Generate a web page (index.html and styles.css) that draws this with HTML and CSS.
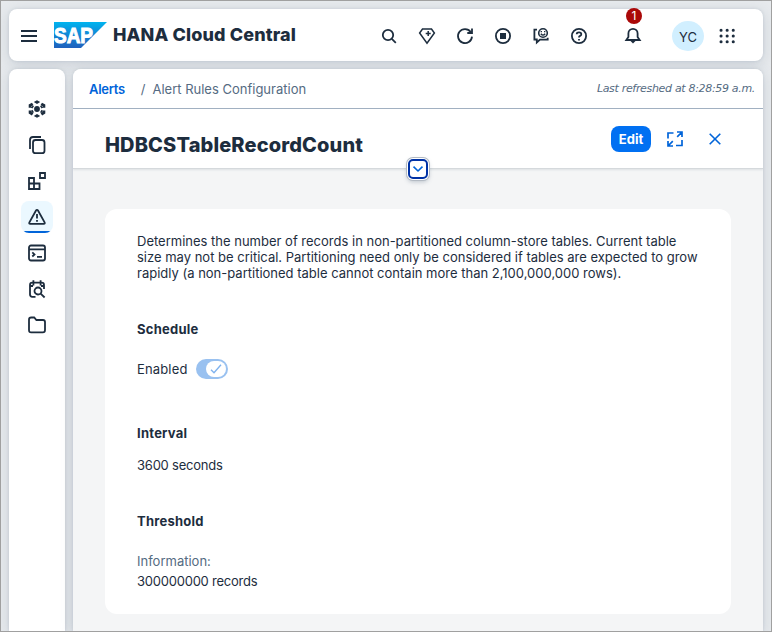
FILE: index.html
```html
<!DOCTYPE html>
<html lang="en">
<head>
<meta charset="utf-8">
<title>HANA Cloud Central</title>
<link rel="stylesheet" href="styles.css">
</head>
<body>
<div class="shell">
  <header class="bar">
    <svg class="icon menu" viewBox="0 0 16 16"><path d="M0 3h16M0 8h16M0 13h16" stroke-width="2"/></svg>
    <svg class="logo" viewBox="0 0 53 26">
      <defs><linearGradient id="lg" x1="0" y1="0" x2="0" y2="1"><stop offset="0" stop-color="#00b4ef"/><stop offset=".5" stop-color="#1286d5"/><stop offset="1" stop-color="#1f61bd"/></linearGradient></defs>
      <path d="M0 0h53L27 26H0z" fill="url(#lg)"/>
      <text x="0" y="20.5" textLength="39" lengthAdjust="spacingAndGlyphs">SAP</text>
    </svg>
    <h1 class="product">HANA Cloud Central</h1>
    <nav class="actions">
      <svg class="icon" viewBox="0 0 16 16"><circle cx="7" cy="7" r="5.2"/><path d="m10.8 10.8 4 4"/></svg>
      <svg class="icon" viewBox="0 0 16 16"><path d="M3.500 1h9L15.4 5 8 15.2.6 5zM9.2 3v5M6.7 5.5h5" stroke-width="1.5"/></svg>
      <svg class="icon" viewBox="0 0 16 16"><path d="M15 8.6A7 7 0 1 1 13.7 4M15 .5V5h-4.7"/></svg>
      <svg class="icon" viewBox="0 0 16 16"><circle cx="8" cy="8" r="7.1"/><path class="solid" d="M5 5h6v6H5z"/></svg>
      <svg class="icon" viewBox="0 0 16 16"><path d="M4 1.600H1.400v9.900h2.400v3L7 11.600h7.700V9.800"/><circle cx="10" cy="5" r="4.300" stroke-width="1.6"/><path d="M7.800 5.700q2.200 2.800 4.400 0M8.300 3.100v1.200M11.700 3.100v1.200" stroke-width="1.4"/></svg>
      <svg class="icon" viewBox="0 0 16 16"><circle cx="8" cy="8" r="7.1"/><path d="M5.7 6.3q0-2 2.300-2t2.300 1.900q0 1.100-1.200 1.600T8 9.500M8 11v1.600"/></svg>
    </nav>
    <div class="bell">
      <svg class="icon" viewBox="0 0 16 16"><path d="M1.300 12h13.400L12.600 9V5.500a4.600 4.600 0 0 0-9.200 0V9z"/><path class="solid" d="M5.500 13h5L8 15.500z"/></svg>
      <span class="badge">1</span>
    </div>
    <div class="avatar">YC</div>
    <svg class="icon grid" viewBox="0 0 16 16"><path d="M1 2.200h14.100M1 8h14.100M1 13.800h14.100"/></svg>
  </header>
  <div class="body">
    <aside class="side">
      <div class="item"><svg class="icon" viewBox="0 0 18 18"><circle class="solid" cx="9" cy="9" r="2.900"/><path class="solid" d="m5.800 2 3.200-1.700L12.200 2 9 3.900zM5.800 16 9 14.100l3.200 1.900L9 17.700z"/><path d="M4.700 3.900 2.100 5.400v2.400M13.300 3.900l2.600 1.500v2.400M2.100 10.600v2.200l2.500 1.600M15.900 10.600v2.200l-2.500 1.600M4 6.500l1.200.8M14 6.500l-1.200.8M4 11.800l1.200-.8M14 11.800l-1.200-.8" stroke-width="2.800"/></svg></div>
      <div class="item"><svg class="icon" viewBox="0 0 18 18"><rect x="5" y="4" width="11.500" height="13.200" rx="2.500"/><path d="M2 13V4Q2 1 5 1h8"/></svg></div>
      <div class="item"><svg class="icon" viewBox="0 0 18 18"><path d="M1 6h5v5.500h5.500V17H1zM1 11.500h5V17M12 1h5v5h-5z"/></svg></div>
      <div class="item on"><svg class="icon" viewBox="0 0 18 18"><path d="M9 1.800q.6 0 1 .7l6.600 11.900q.7 1.500-.9 1.500H2.300q-1.600 0-.9-1.500L8 2.500q.4-.7 1-.7zM9 6v4.600M9 12v1.700"/></svg></div>
      <div class="item"><svg class="icon" viewBox="0 0 18 18"><rect x="1" y="1.500" width="16" height="15" rx="2"/><path d="M1 5.400h16M4.300 8.300 6.500 10.400 4.300 12.500M9 12.900h5"/></svg></div>
      <div class="item"><svg class="icon" viewBox="0 0 18 18"><path d="M7.500 16.800H4.300Q2 16.800 2 14.500V5q0-2.300 2.300-2.300h9.400Q16 2.700 16 5v4M5.400.3v5.200M12.600.3v5.200M2 6h3M13 6h3"/><circle cx="10" cy="11" r="3.500"/><path d="m12.600 13.600 4 3.900"/></svg></div>
      <div class="item"><svg class="icon" viewBox="0 0 18 18"><path d="M1 14V3.800Q1 1.500 3.200 1.500h3L8.400 4H15q2 0 2 2v8q0 2.400-2.200 2.400H3.200Q1 16.400 1 14z"/></svg></div>
    </aside>
    <main class="main">
      <div class="crumbs">
        <a class="link">Alerts</a><span class="sep">/</span><span>Alert Rules Configuration</span>
        <em class="refreshed">Last refreshed at 8:28:59 a.m.</em>
      </div>
      <div class="head">
        <h2 class="title">HDBCSTableRecordCount</h2>
        <button class="edit">Edit</button>
        <svg class="icon blue full" viewBox="0 0 16 16"><path d="M1 7.500V2h5.500M15 9v5.500H9M10 1h5v5M15 1l-4.800 4.800M1 10v5h5M1 15l4.800-4.800" stroke-width="1.7"/></svg>
        <svg class="icon blue close" viewBox="0 0 12 12"><path d="m.7.7 10.600 10.600m0-10.600L.7 11.300" stroke-width="1.6"/></svg>
        <span class="expand"><svg class="icon blue" viewBox="0 0 10 6"><path d="M.5.6 5 5 9.500.6" stroke-width="1.6"/></svg></span>
      </div>
      <section class="card">
        <p class="desc">Determines the number of records in non-partitioned column-store tables. Current table<br>size may not be critical. Partitioning need only be considered if tables are expected to grow<br>rapidly (a non-partitioned table cannot contain more than 2,100,000,000 rows).</p>
        <div class="group schedule">
          <h3>Schedule</h3>
          <div class="row">Enabled<span class="switch"><span class="knob"><svg class="check" viewBox="0 0 12 10"><path d="m1 5.700 3 3L11 .8"/></svg></span></span></div>
        </div>
        <div class="group interval">
          <h3>Interval</h3>
          <div class="tight">3600 seconds</div>
        </div>
        <div class="group threshold">
          <h3>Threshold</h3>
          <div class="label">Information:</div>
          <div class="tight">300000000 records</div>
        </div>
      </section>
    </main>
  </div>
</div>
</body>
</html>
```
FILE: styles.css
```css
* { box-sizing: border-box; }
body { margin: 0; font: 13px/16px Inter, sans-serif; color: #1d2d3e; }
h1, h2, h3, p { margin: 0; }
.shell { width: 772px; height: 632px; border: 1px solid #a0a0a0; padding: 8px 8px 0; overflow: hidden; background: #e7eaed; display: flex; flex-direction: column; gap: 8px; }
.bar, .side, .main { background: #fff; box-shadow: 0 0 3px rgba(85, 107, 130, .18), 0 3px 14px rgba(85, 107, 130, .2); }
.icon { display: block; width: 16px; height: 16px; fill: none; stroke: #1d2d3e; stroke-width: 1.8; flex: none; overflow: visible; }
.solid { fill: #1d2d3e; stroke: none; }
.blue { stroke: #0064d9; }

.bar { flex: none; width: 754px; height: 52px; border-radius: 8px; display: flex; align-items: center; padding: 1px 0 0 12px; }
.menu { margin-right: 17px; }
.logo { width: 53px; height: 26px; margin-top: -1px; }
.logo text { font: bold 22px "Liberation Sans", sans-serif; fill: #fff; stroke: #fff; stroke-width: 1; }
.product { margin: -1px 0 0 6px; width: 268px; font: 800 18px/24px Inter, sans-serif; letter-spacing: .12px; }
.actions { display: flex; gap: 22px; }
.bell { position: relative; margin-left: 38px; }
.badge { position: absolute; left: 1px; top: -20px; width: 16px; height: 16px; border-radius: 8px; background: #aa0808; color: #fff; font-size: 12px; line-height: 16px; text-align: center; }
.avatar { margin-left: 31px; width: 32px; height: 30px; border-radius: 50%; background: #d1efff; line-height: 32px; text-align: center; }
.grid { margin-left: 16px; stroke-width: 3; stroke-linecap: round; stroke-dasharray: .1 6; }

.body { flex: 1; display: flex; gap: 8px; }
.side { width: 56px; border-radius: 8px 8px 0 0; padding: 24px 12px 0; display: flex; flex-direction: column; gap: 4px; }
.item { height: 32px; border-radius: 8px; display: flex; align-items: center; justify-content: center; }
.item .icon { width: 18px; height: 18px; }
.on { background: linear-gradient(#0064d9, #0064d9) 50% 100% / 28px 2px no-repeat, #ebf8ff; }

.main { width: 690px; border-radius: 8px 8px 0 0; background: #f4f5f6; overflow: hidden; }
.crumbs { height: 40px; background: #fff; border-bottom: 1px solid #a3b1c2; padding: 1px 8px 0 16px; display: flex; align-items: center; color: #556b82; }
.link { color: #0064d9; font-weight: 600; letter-spacing: -.3px; }
.sep { margin: 0 7px 0 16px; }
.refreshed { margin-left: auto; font: italic 11px/14px "DejaVu Sans", sans-serif; letter-spacing: -.32px; }
.head { position: relative; height: 60px; background: #fff; border-bottom: 1px solid #d5d9dc; box-shadow: 0 1px 2px rgba(85, 107, 130, .15); padding: 0 42px 0 32px; display: flex; align-items: center; }
.title { flex: 1; margin-top: 12px; font: 800 20px/24px Inter, sans-serif; letter-spacing: .13px; }
.edit { width: 40px; height: 26px; border: 0; border-radius: 8px; padding: 0; background: #0070f2; color: #fff; font: 700 13px/27px Inter, sans-serif; margin-top: 1px; }
.full { margin: 1px 0 0 16px; }
.close { width: 12px; height: 12px; margin: 1px 0 0 26px; }
.expand { position: absolute; left: 335px; top: 50px; width: 20px; height: 20px; border: 2px solid #0032a5; border-radius: 5px; background: #fff; display: flex; align-items: center; justify-content: center; box-shadow: 0 0 0 1px #fff, 0 0 0 2px #b3bac3, 0 2px 4px 1px rgba(85, 107, 130, .35); }
.expand .icon { width: 10px; height: 6px; }

.card { margin: 40px 32px 0; height: 405px; border-radius: 12px; background: #fff; padding: 24px 0 0 32px; }
.desc { white-space: nowrap; }
h3 { font: 700 13px/16px Inter, sans-serif; letter-spacing: .25px; }
.group { display: flex; flex-direction: column; }
.schedule { margin-top: 40px; gap: 22px; }
.row { height: 20px; display: flex; align-items: center; gap: 8px; letter-spacing: .15px; }
.switch { width: 32px; height: 20px; border-radius: 10px; background: #99c1f0; padding: 2px; display: flex; justify-content: flex-end; }
.knob { width: 20px; height: 16px; border-radius: 8px; background: #fff; display: flex; align-items: center; justify-content: center; }
.check { width: 12px; height: 10px; fill: none; stroke: #7fb2ee; stroke-width: 1.4; }
.interval { margin-top: 46px; gap: 16px; }
.threshold { margin-top: 40px; }
.label { margin: 24px 0 4px; color: #556b82; }
.tight { letter-spacing: -.23px; }
```
